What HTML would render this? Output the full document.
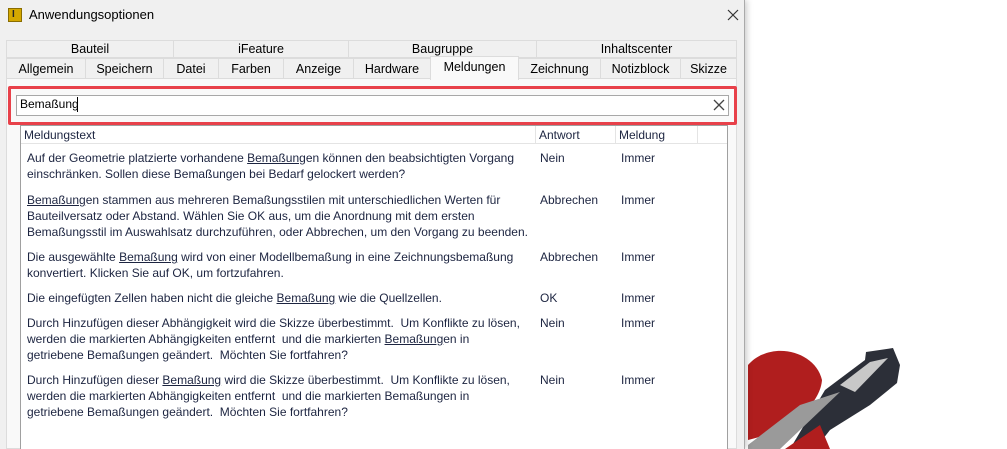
<!DOCTYPE html>
<html><head><meta charset="utf-8"><style>
*{margin:0;padding:0;box-sizing:border-box}
body{width:1007px;height:449px;overflow:hidden;background:#fff;font-family:"Liberation Sans",sans-serif;position:relative}
.dlg{position:absolute;left:0;top:0;width:745px;height:449px;background:#f0f0f0;border-right:1px solid #aaa;box-shadow:2px 0 6px rgba(0,0,0,.2)}
.a{position:absolute;white-space:nowrap}
.tab{position:absolute;border:1px solid #dcdcdc;background:#f0f0f0;font-size:12.5px;color:#000;text-align:center;line-height:17px}
.t{position:absolute;left:27px;font-size:12px;color:#1c2440;white-space:nowrap;line-height:16px}
.c{position:absolute;font-size:12px;color:#1c2440;white-space:nowrap;line-height:16px}
u{text-decoration:underline}
</style></head><body>
<svg class="a" style="left:745px;top:320px" width="262" height="129" viewBox="745 320 262 129">
<path d="M825 390 L865 360 L866 352 L893 348 L900 365 L897 383 L870 405 L830 430 L815 449 L790 449 Z" fill="#2c2f38"/>
<path d="M840 385 L870 362 L888 358 L855 392 Z" fill="#c8c8c8"/>
<path d="M748 365 C770 340 815 350 822 380 C820 405 790 430 748 440 Z" fill="#b01e1e"/>
<path d="M748 445 L800 405 L840 392 L780 449 L748 449 Z" fill="#9a9a9a"/>
<path d="M785 449 L820 425 L830 449 Z" fill="#b01e1e"/>
</svg>
<div class="dlg">
<div class="a" style="left:8px;top:8px;width:14px;height:14px;background:#d4a800;border:1px solid #8a6d00"></div>
<div class="a" style="left:12px;top:9px;font-size:10px;font-weight:bold;color:#222">I</div>
<div class="a" style="left:29px;top:7px;font-size:13px;color:#000">Anwendungsoptionen</div>
<svg class="a" style="left:727px;top:9px" width="12" height="12"><path d="M1 1L11 11M11 1L1 11" stroke="#333" stroke-width="1.2"/></svg>

<div class="tab" style="left:6px;top:40px;width:168px;height:18px">Bauteil</div>
<div class="tab" style="left:173px;top:40px;width:176px;height:18px">iFeature</div>
<div class="tab" style="left:348px;top:40px;width:189px;height:18px">Baugruppe</div>
<div class="tab" style="left:536px;top:40px;width:201px;height:18px">Inhaltscenter</div>

<div class="tab" style="left:6px;top:58px;width:80px;height:21px;line-height:21px">Allgemein</div>
<div class="tab" style="left:85px;top:58px;width:79px;height:21px;line-height:21px">Speichern</div>
<div class="tab" style="left:163px;top:58px;width:56px;height:21px;line-height:21px">Datei</div>
<div class="tab" style="left:218px;top:58px;width:66px;height:21px;line-height:21px">Farben</div>
<div class="tab" style="left:283px;top:58px;width:71px;height:21px;line-height:21px">Anzeige</div>
<div class="tab" style="left:353px;top:58px;width:78px;height:21px;line-height:21px">Hardware</div>
<div class="tab" style="left:518px;top:58px;width:83px;height:21px;line-height:21px">Zeichnung</div>
<div class="tab" style="left:600px;top:58px;width:81px;height:21px;line-height:21px">Notizblock</div>
<div class="tab" style="left:680px;top:58px;width:57px;height:21px;line-height:21px">Skizze</div>

<div class="a" style="left:6px;top:78px;width:731px;height:371px;background:#f9f9f9;border:1px solid #dcdcdc"></div>
<div class="tab" style="left:430px;top:56px;width:89px;height:24px;line-height:20px;background:#f9f9f9;border-bottom:none">Meldungen</div>

<div class="a" style="left:20px;top:125px;width:708px;height:324px;background:#fff;border:1px solid #a0a0a0;border-bottom:none"></div>
<div class="a" style="left:21px;top:126px;width:706px;height:18px;background:#fff;border-bottom:1px solid #e4e4e4"></div>
<div class="a" style="left:535px;top:126px;width:1px;height:18px;background:#e4e4e4"></div>
<div class="a" style="left:615px;top:126px;width:1px;height:18px;background:#e4e4e4"></div>
<div class="a" style="left:697px;top:126px;width:1px;height:18px;background:#e4e4e4"></div>
<div class="c" style="left:24px;top:127px">Meldungstext</div>
<div class="c" style="left:539px;top:127px">Antwort</div>
<div class="c" style="left:619px;top:127px">Meldung</div>

<div class="a" style="left:8px;top:86px;width:729px;height:39px;border:3px solid #e8414a;border-radius:2px"></div>
<div class="a" style="left:16px;top:95px;width:713px;height:21px;background:#fff;border:1px solid #a8a8a8"></div>
<div class="a" style="left:20px;top:97px;font-size:12px;color:#000">Bemaßung</div>
<div class="a" style="left:77px;top:97px;width:1px;height:15px;background:#000"></div>
<svg class="a" style="left:713px;top:99px" width="12" height="12"><path d="M1 1L11 11M11 1L1 11" stroke="#444" stroke-width="1.3"/></svg>

<div class="t" style="top:150px">Auf der Geometrie platzierte vorhandene <u>Bemaßung</u>en können den beabsichtigten Vorgang</div>
<div class="t" style="top:166px">einschränken. Sollen diese Bemaßungen bei Bedarf gelockert werden?</div>
<div class="c" style="left:540px;top:150px">Nein</div><div class="c" style="left:621px;top:150px">Immer</div>

<div class="t" style="top:192px"><u>Bemaßung</u>en stammen aus mehreren Bemaßungsstilen mit unterschiedlichen Werten für</div>
<div class="t" style="top:208px">Bauteilversatz oder Abstand. Wählen Sie OK aus, um die Anordnung mit dem ersten</div>
<div class="t" style="top:224px">Bemaßungsstil im Auswahlsatz durchzuführen, oder Abbrechen, um den Vorgang zu beenden.</div>
<div class="c" style="left:540px;top:192px">Abbrechen</div><div class="c" style="left:621px;top:192px">Immer</div>

<div class="t" style="top:249px">Die ausgewählte <u>Bemaßung</u> wird von einer Modellbemaßung in eine Zeichnungsbemaßung</div>
<div class="t" style="top:265px">konvertiert. Klicken Sie auf OK, um fortzufahren.</div>
<div class="c" style="left:540px;top:249px">Abbrechen</div><div class="c" style="left:621px;top:249px">Immer</div>

<div class="t" style="top:290px">Die eingefügten Zellen haben nicht die gleiche <u>Bemaßung</u> wie die Quellzellen.</div>
<div class="c" style="left:540px;top:290px">OK</div><div class="c" style="left:621px;top:290px">Immer</div>

<div class="t" style="top:315px">Durch Hinzufügen dieser Abhängigkeit wird die Skizze überbestimmt.&nbsp; Um Konflikte zu lösen,</div>
<div class="t" style="top:331px">werden die markierten Abhängigkeiten entfernt&nbsp; und die markierten <u>Bemaßung</u>en in</div>
<div class="t" style="top:347px">getriebene Bemaßungen geändert.&nbsp; Möchten Sie fortfahren?</div>
<div class="c" style="left:540px;top:315px">Nein</div><div class="c" style="left:621px;top:315px">Immer</div>

<div class="t" style="top:372px">Durch Hinzufügen dieser <u>Bemaßung</u> wird die Skizze überbestimmt.&nbsp; Um Konflikte zu lösen,</div>
<div class="t" style="top:388px">werden die markierten Abhängigkeiten entfernt&nbsp; und die markierten Bemaßungen in</div>
<div class="t" style="top:404px">getriebene Bemaßungen geändert.&nbsp; Möchten Sie fortfahren?</div>
<div class="c" style="left:540px;top:372px">Nein</div><div class="c" style="left:621px;top:372px">Immer</div>
</div>
</body></html>
